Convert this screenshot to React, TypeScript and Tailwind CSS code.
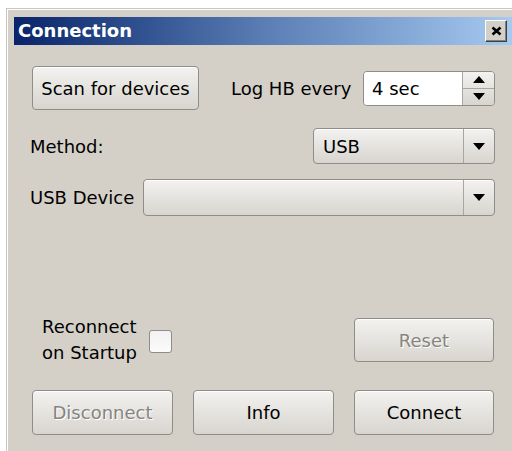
import React, { useState } from 'react';

const font = { fontFamily: '"DejaVu Sans", Verdana, sans-serif' };

const btnBase =
    'rounded-[4px] border border-[#8f8d88] bg-gradient-to-b from-[#f3f2f0] to-[#d8d5cf] shadow-[inset_0_1px_0_#fff] flex items-center justify-center text-[18px]';

const PushButton: React.FC<{ label: string; disabled?: boolean; className?: string }> = ({ label, disabled, className }) => (
    <button
        disabled={disabled}
        className={`${btnBase} ${disabled ? 'text-[#86847f] [text-shadow:1px_1px_0_#fff]' : 'text-black'} ${className ?? ''}`}
    >
        {label}
    </button>
);

const DownArrow: React.FC = () => (
    <svg width="12" height="7" viewBox="0 0 12 7">
        <path d="M0 0 H12 L6 7 Z" fill="#000" />
    </svg>
);

const UpArrow: React.FC = () => (
    <svg width="12" height="7" viewBox="0 0 12 7">
        <path d="M0 7 H12 L6 0 Z" fill="#000" />
    </svg>
);

const ComboBox: React.FC<{ value: string; className?: string }> = ({ value, className }) => (
    <div className={`${btnBase} justify-start ${className ?? ''}`}>
        <span className="flex-1 pl-[9px] text-left">{value}</span>
        <span className="w-[31px] h-full border-l border-[#a9a6a0] flex items-center justify-center">
            <DownArrow />
        </span>
    </div>
);

const SpinBox: React.FC<{ value: string }> = ({ value }) => (
    <div className="flex w-[132px] h-[35px] rounded-[4px] border border-[#8f8d88] overflow-hidden">
        <div className="flex-1 bg-white flex items-center pl-[8px] text-[18px]">{value}</div>
        <div className="w-[32px] flex flex-col border-l border-[#a9a6a0] bg-gradient-to-b from-[#f3f2f0] to-[#d8d5cf]">
            <span className="flex-1 flex items-center justify-center border-b border-[#a9a6a0]">
                <UpArrow />
            </span>
            <span className="flex-1 flex items-center justify-center">
                <DownArrow />
            </span>
        </div>
    </div>
);

const App: React.FC = () => {
    const [reconnect, setReconnect] = useState(false);

    return (
        <div className="w-[512px] h-[451px] overflow-hidden bg-white" style={font}>
            <div className="ml-[6px] mt-[8px] h-[443px] border-l border-t border-[#c8c5c0]">
                <div className="h-full border-l border-t border-white bg-[#d4d0c8] pl-[6px] pt-[7px]">
                    {/* title bar */}
                    <div className="h-[28px] flex items-center bg-gradient-to-r from-[#0a246a] via-[#5a7db4] to-[#a6caf0] pl-[4px] pr-[5px]">
                        <span className="flex-1 text-white font-bold text-[18px] leading-none">Connection</span>
                        <span className="w-[22px] h-[22px] bg-[#d4d0c8] border border-t-white border-l-white border-r-[#404040] border-b-[#404040] flex items-center justify-center shadow-[inset_-1px_-1px_0_#808080]">
                            <svg width="11" height="10" viewBox="0 0 11 10">
                                <path d="M1.5 1.5 L9.5 8.5 M9.5 1.5 L1.5 8.5" stroke="#000" strokeWidth="2.6" />
                            </svg>
                        </span>
                    </div>

                    <div className="pl-[16px] pr-[17px] text-[18px] text-black">
                        <div className="mt-[21px] flex items-center">
                            <PushButton label="Scan for devices" className="ml-[2px] w-[167px] h-[44px]" />
                            <span className="ml-[32px] mr-[11px]">Log HB every</span>
                            <div className="ml-auto">
                                <SpinBox value="4 sec" />
                            </div>
                        </div>

                        <div className="mt-[18px] flex items-center">
                            <span>Method:</span>
                            <ComboBox value="USB" className="ml-auto w-[182px] h-[36px]" />
                        </div>

                        <div className="mt-[15px] flex items-center">
                            <span>USB Device</span>
                            <ComboBox value="" className="ml-auto w-[352px] h-[37px]" />
                        </div>

                        <div className="mt-[98px] flex items-center">
                            <div className="ml-[12px] leading-[26px]">
                                Reconnect
                                <br />
                                on Startup
                            </div>
                            <button
                                onClick={() => setReconnect(!reconnect)}
                                className="ml-[12px] mt-[2px] w-[23px] h-[23px] rounded-[3px] border border-[#8f8d88] bg-gradient-to-b from-[#f2f2f2] to-[#fbfbfb]"
                            >
                                {reconnect ? '✓' : ''}
                            </button>
                            <PushButton label="Reset" disabled className="ml-auto mr-[1px] w-[140px] h-[44px]" />
                        </div>

                        <div className="mt-[24px] flex items-center ml-[2px] mr-[1px] gap-[20px]">
                            <PushButton label="Disconnect" disabled className="w-[141px] h-[45px]" />
                            <PushButton label="Info" className="w-[141px] h-[45px]" />
                            <PushButton label="Connect" className="w-[140px] h-[45px]" />
                        </div>
                    </div>
                </div>
            </div>
        </div>
    );
};

export default App;
